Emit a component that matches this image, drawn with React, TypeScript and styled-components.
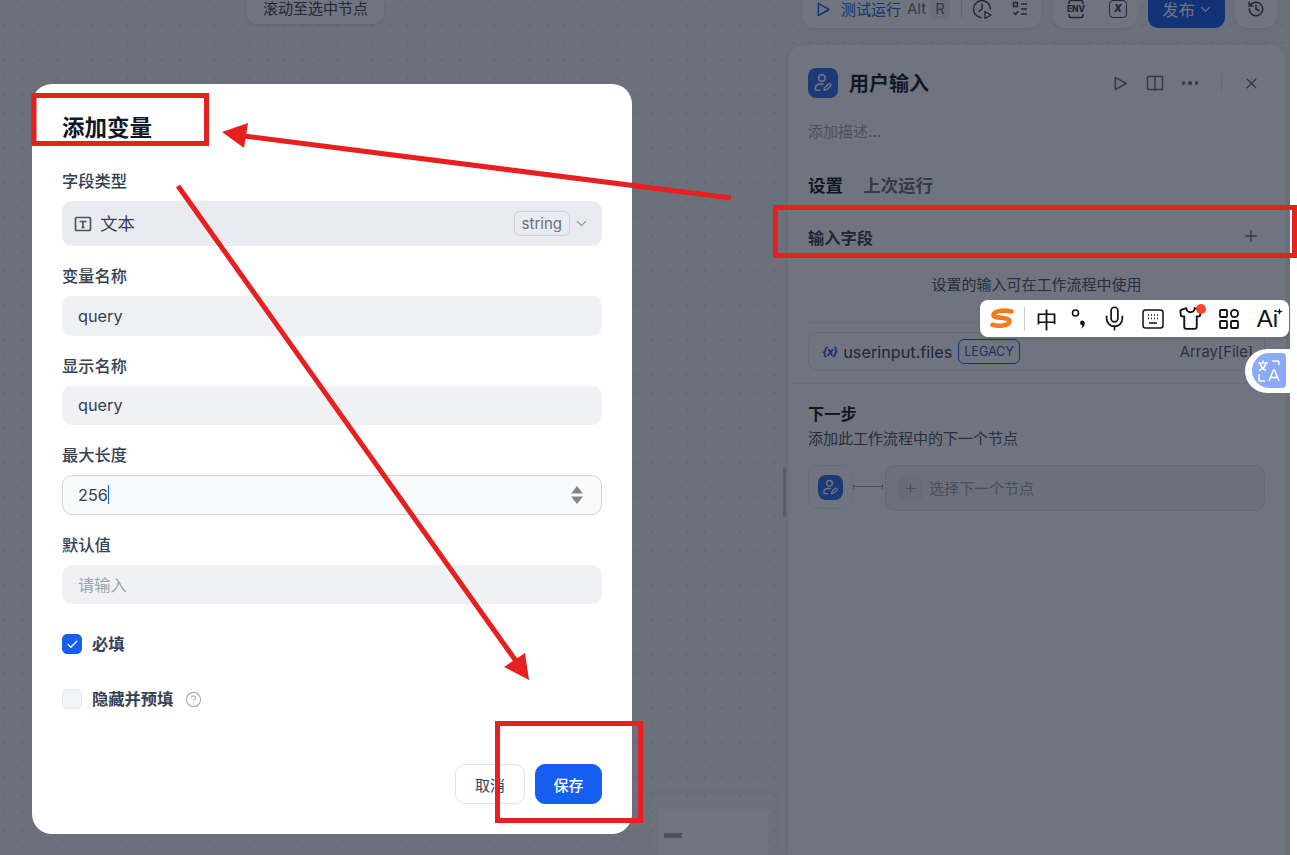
import styled, { createGlobalStyle } from "styled-components";
import {
  Check,
  ChevronDown,
  CircleHelp,
  History,
  Mic,
  Plus,
  Shirt,
  X,
} from "lucide-react";

const GlobalStyle = createGlobalStyle`
  html, body {
    margin: 0;
    padding: 0;
    background: #fff;
    overflow: hidden;
  }
  body {
    font-family: Inter, "Noto Sans CJK SC", sans-serif;
    color: #354052;
  }
  * {
    box-sizing: border-box;
  }
`;

const FIELDS = [
  { label: "变量名称", value: "query" },
  { label: "显示名称", value: "query" },
];

function PlayIcon({ size = 16, color = "currentColor" }: { size?: number; color?: string }) {
  return (
    <svg width={size} height={size} viewBox="0 0 16 16" fill="none">
      <path d="M2.5 1.5 14 8 2.5 14.5Z" stroke={color} strokeWidth="1.6" strokeLinejoin="round" />
    </svg>
  );
}

function UserEditIcon({ size = 18 }: { size?: number }) {
  return (
    <svg width={size} height={size} viewBox="0 0 18 18" fill="none" stroke="#fff" strokeWidth="1.5" strokeLinecap="round">
      <circle cx="8" cy="4.5" r="3" />
      <path d="M9 10H6.5C3.5 10 2 12 2 14.2c0 1 .6 1.3 1.4 1.3H6" />
      <path d="m10 15.5.5-2.2 3.4-3.3a1.3 1.3 0 0 1 1.9 1.8l-3.5 3.2Z" strokeWidth="1.3" strokeLinejoin="round" />
    </svg>
  );
}

function App() {
  return (
    <>
      <GlobalStyle />
      <Page>
        <Stage>
          <Canvas>
            <ScrollHint>滚动至选中节点</ScrollHint>
            <Minimap>
              <MinimapInner>
                <MinimapNode />
              </MinimapInner>
            </Minimap>
            <ResizeHandle />
          </Canvas>

          <Side>
            <Toolbar>
              <ToolGroup $width={239} $after={1}>
                <RunButton>
                  <PlayIcon size={15} />
                  <RunLabel>测试运行</RunLabel>
                </RunButton>
                <Shortcut>Alt</Shortcut>
                <Shortcut $tinted>R</Shortcut>
                <ToolDivider />
                <svg width="20" height="20" viewBox="0 0 20 20" fill="none" stroke="#354052" strokeWidth="1.5">
                  <path d="M9 18.5a8.5 8.5 0 1 1 9.5-8.5" strokeLinecap="round" />
                  <path d="M10 5v5l-3 2.5" strokeLinecap="round" />
                  <path d="m13 12.5 6 3.5-6 3.5Z" strokeLinejoin="round" strokeWidth="1.3" />
                </svg>
                <ChecklistIcon viewBox="0 0 16 16" fill="none" stroke="#354052" strokeWidth="1.5">
                  <rect x="1.5" y="1.5" width="4" height="4" />
                  <path d="M9 3h6M9 8h6M9 13h6M1.5 11.5l2 2 3-3.5" />
                </ChecklistIcon>
              </ToolGroup>
              <ToolGroup $width={84}>
                <EnvIcon>
                  <svg width="18" height="20" viewBox="0 0 18 20" fill="none" stroke="#354052" strokeWidth="1.5">
                    <path d="M2 5V3.5A2 2 0 0 1 4 1.500h10a2 2 0 0 1 2 2V5M2 15v1.500a2 2 0 0 0 2 2h10a2 2 0 0 0 2-2V15" />
                  </svg>
                  <EnvLabel>ENV</EnvLabel>
                </EnvIcon>
                <VarIcon>x</VarIcon>
              </ToolGroup>
              <PublishButton>
                发布
                <ChevronDown size={15} strokeWidth={2.2} />
              </PublishButton>
              <ToolGroup $width={42}>
                <History size={18} color="#354052" strokeWidth={2} />
              </ToolGroup>
            </Toolbar>

            <Panel>
              <PanelHeader>
                <NodeIcon $size={30}>
                  <UserEditIcon size={20} />
                </NodeIcon>
                <PanelTitle>用户输入</PanelTitle>
                <HeaderActions>
                  <PlayIcon size={15} color="#676f83" />
                  <svg width="18" height="18" viewBox="0 0 18 18" fill="none" stroke="#676f83" strokeWidth="1.5">
                    <path d="M1.500 2.500H9v13H1.500ZM9 2.500h7.500v13H9ZM9 15.500v1.500" strokeLinejoin="round" />
                  </svg>
                  <Dots>
                    <i />
                    <i />
                    <i />
                  </Dots>
                  <ActionDivider />
                  <X size={17} color="#676f83" strokeWidth={2} />
                </HeaderActions>
              </PanelHeader>
              <PanelDescription>添加描述...</PanelDescription>

              <Tabs>
                <Tab $active>设置</Tab>
                <Tab>上次运行</Tab>
              </Tabs>

              <PanelSection>
                <FieldsHeader>
                  输入字段
                  <Plus size={18} color="#676f83" strokeWidth={1.8} />
                </FieldsHeader>
                <Helper>设置的输入可在工作流程中使用</Helper>
                <ThinRule />
                <VariableRow>
                  <VariableMark>{"{x}"}</VariableMark>
                  <VariableName>userinput.files</VariableName>
                  <LegacyBadge>LEGACY</LegacyBadge>
                  <VariableType>Array[File]</VariableType>
                </VariableRow>
              </PanelSection>
              <PanelRule />

              <PanelSection>
                <NextTitle>下一步</NextTitle>
                <NextHint>添加此工作流程中的下一个节点</NextHint>
                <NextRow>
                  <NodeCard>
                    <NodeIcon $size={25}>
                      <UserEditIcon size={17} />
                    </NodeIcon>
                  </NodeCard>
                  <Connector />
                  <NextSlot>
                    <SlotPlus>
                      <Plus size={15} color="#98a2b2" strokeWidth={1.8} />
                    </SlotPlus>
                    <SlotText>选择下一个节点</SlotText>
                  </NextSlot>
                </NextRow>
              </PanelSection>
            </Panel>
          </Side>
          <Scrim />
        </Stage>

        <Dialog>
          <DialogTitle>添加变量</DialogTitle>
          <Field>
            <FieldLabel>字段类型</FieldLabel>
            <SelectBox>
              <svg width="18" height="18" viewBox="0 0 18 18" fill="none" stroke="#495464" strokeWidth="1.7">
                <rect x="1.500" y="2.500" width="15" height="13" rx="1" />
                <path d="M5.500 6.500h7M9 6.500v6M7.500 12.500h3" />
              </svg>
              <SelectText>文本</SelectText>
              <TypeTag>string</TypeTag>
              <ChevronDown size={17} color="#8a93a3" strokeWidth={1.8} />
            </SelectBox>
          </Field>
          {FIELDS.map((f) => (
            <Field key={f.label}>
              <FieldLabel>{f.label}</FieldLabel>
              <TextBox>{f.value}</TextBox>
            </Field>
          ))}
          <Field>
            <FieldLabel>最大长度</FieldLabel>
            <TextBox $focused>
              256
              <Caret />
              <Spinner viewBox="0 0 12 20">
                <path d="M6 1 12 8.500H0ZM6 19 0 11.500h12Z" fill="#858585" />
              </Spinner>
            </TextBox>
          </Field>
          <Field>
            <FieldLabel>默认值</FieldLabel>
            <TextBox $placeholder>请输入</TextBox>
          </Field>

          <CheckRows>
            <CheckRow>
              <CheckBox $checked>
                <Check size={13} color="#fff" strokeWidth={2.4} />
              </CheckBox>
              必填
            </CheckRow>
            <CheckRow>
              <CheckBox />
              隐藏并预填
              <HelpIcon size={17} color="#a9afba" strokeWidth={1.6} />
            </CheckRow>
          </CheckRows>

          <DialogFooter>
            <CancelButton>取消</CancelButton>
            <SaveButton>保存</SaveButton>
          </DialogFooter>
        </Dialog>

        <ImeBar>
          <ImeSlot>
            <svg width="24" height="21" viewBox="0 0 24 21" fill="none" stroke="#f37a1f" strokeWidth="4.600" strokeLinecap="round">
              <path d="M21.500 3.500C14 1.800 4 2.500 3.500 7c-.4 4 16.500 1.500 16 6.500-.4 4.500-11 5-17 3.300" />
            </svg>
          </ImeSlot>
          <ImeSlot $rule>中</ImeSlot>
          <ImeSlot>
            <svg width="16" height="24" viewBox="0 0 16 24" fill="none">
              <circle cx="4.500" cy="6" r="3" stroke="#111" strokeWidth="1.500" />
              <path d="M10.800 13.500a2.600 2.600 0 0 1 3 2.500c0 2.400-1.300 4.200-3.600 5.800.9-1.700 1.200-2.700.8-3.500a2.500 2.500 0 0 1-.2-4.800Z" fill="#111" />
            </svg>
          </ImeSlot>
          <ImeSlot>
            <Mic size={27} color="#111" strokeWidth={1.500} />
          </ImeSlot>
          <ImeSlot>
            <svg width="22" height="20" viewBox="0 0 22 20" fill="none" stroke="#111" strokeWidth="1.500">
              <rect x="1" y="1" width="20" height="18" rx="2.500" />
              <path d="M6 6h1M9 6h1M12 6h1M15 6h1M6 9.500h1M9 9.500h1M12 9.500h1M15 9.500h1M7 14h8" />
            </svg>
          </ImeSlot>
          <ImeSlot>
            <Shirt size={25} color="#111" strokeWidth={1.800} />
            <RedDot />
          </ImeSlot>
          <ImeSlot>
            <svg width="20" height="20" viewBox="0 0 20 20" fill="none" stroke="#111" strokeWidth="1.800">
              <rect x="1" y="1" width="7" height="7" rx="1" />
              <circle cx="15.500" cy="4.500" r="3.600" />
              <rect x="1" y="12" width="7" height="7" rx="1" />
              <rect x="12" y="12" width="7" height="7" rx="1" />
            </svg>
          </ImeSlot>
          <ImeSlot $ai>
            Ai
            <AiSpark viewBox="0 0 8 8">
              <path d="M4 0 5 3 8 4 5 5 4 8 3 5 0 4 3 3Z" fill="#111" />
            </AiSpark>
          </ImeSlot>
        </ImeBar>

        <TranslateTab>
          <TranslateButton>
            <svg width="24" height="24" viewBox="0 0 24 24" fill="none" stroke="#fff" strokeWidth="1.400">
              <path d="M1 4h10M6 1.500V4M3 4c.8 3.500 3 6 6 7.500M9 4c-.8 3.500-3 6-7 7.500M15 2h6a1 1 0 0 1 1 1v3M2 15v6a1 1 0 0 0 1 1h5M12 22l4.500-11h1L22 22M13.500 18.500h7" />
            </svg>
          </TranslateButton>
        </TranslateTab>

        <Annotations viewBox="0 0 1297 855">
          <g fill="none" stroke="#e71f1f" strokeWidth="5">
            <rect x="34" y="95.500" width="172.500" height="48" />
            <rect x="775.500" y="207.500" width="519" height="48" />
            <rect x="497.500" y="723.500" width="143" height="97" />
          </g>
          <path d="M731 198 240 135.500M178 186 516 661" stroke="#e71f1f" strokeWidth="5" fill="none" />
          <path d="M222 132 248 123 244 148ZM529 680 504 667 525 653Z" fill="#e71f1f" />
        </Annotations>
      </Page>
    </>
  );
}

export default App;

const Page = styled.div`
  position: relative;
  width: 1297px;
  height: 855px;
  overflow: hidden;
  background: #fff;
`;

const Stage = styled.div`
  position: relative;
  width: 1290px;
  height: 855px;
  display: grid;
  grid-template-columns: 788px 1fr;
  overflow: hidden;
  background-color: #f2f4f7;
  background-image: radial-gradient(circle, #d8dce3 1.2px, transparent 1.3px);
  background-size: 17.5px 17.5px;
  background-position: -4px -1px;
`;

const Scrim = styled.div`
  position: absolute;
  inset: 0;
  background: rgba(16, 24, 40, 0.6);
`;

const Canvas = styled.div`
  position: relative;
  display: flex;
  flex-direction: column;
  justify-content: space-between;
`;

const ScrollHint = styled.div`
  margin-left: 247px;
  width: 137px;
  height: 24px;
  border-radius: 0 0 10px 10px;
  background: #fff;
  box-shadow: 0 1px 3px rgba(16, 24, 40, 0.1);
  font-size: 15px;
  line-height: 17px;
  text-align: center;
  color: #354052;
`;

const Minimap = styled.div`
  margin-left: 650px;
  width: 126px;
  height: 61px;
  padding: 15px 8px 0;
  box-shadow: 0 -1px 6px rgba(16, 24, 40, 0.04);
`;

const MinimapInner = styled.div`
  height: 100%;
  padding: 24px 6px 0;
  background: #fff;
`;

const MinimapNode = styled.div`
  width: 18px;
  height: 5px;
  background: #a6acb8;
`;

const ResizeHandle = styled.div`
  position: absolute;
  left: 783px;
  top: 467px;
  width: 3px;
  height: 50px;
  border-radius: 2px;
  background: #c4c8d0;
`;

const Side = styled.div`
  display: flex;
  flex-direction: column;
  padding-right: 4px;
  min-width: 0;
`;

const Toolbar = styled.div`
  height: 28px;
  margin-bottom: 17px;
  padding-left: 14px;
  display: flex;
  align-items: flex-end;
  gap: 11px;
`;

const ToolGroup = styled.div<{ $width: number; $after?: number }>`
  flex: none;
  width: ${(p) => p.$width}px;
  height: 38px;
  margin-right: ${(p) => p.$after ?? 0}px;
  padding: 0 8px 0 14px;
  display: flex;
  align-items: center;
  border-radius: 12px;
  background: #fff;
  box-shadow: 0 1px 2px rgba(16, 24, 40, 0.08);
  color: #354052;

  &:last-child {
    padding: 0;
    justify-content: center;
  }
`;

const RunButton = styled.div`
  display: flex;
  align-items: center;
  gap: 10px;
  font-size: 15px;
  color: #155eef;
  white-space: nowrap;
`;

const RunLabel = styled.span`
  padding-bottom: 2px;
`;

const Shortcut = styled.span<{ $tinted?: boolean }>`
  margin-left: ${(p) => (p.$tinted ? 4 : 6)}px;
  padding: 0 ${(p) => (p.$tinted ? 5 : 0)}px;
  border-radius: 4px;
  background: ${(p) => (p.$tinted ? "rgba(200, 206, 218, 0.25)" : "transparent")};
  font-size: 15px;
  line-height: 20px;
  color: #676f83;
`;

const ToolDivider = styled.span`
  width: 1px;
  height: 18px;
  margin: 0 10px 0 11px;
  background: #d5d9e0;
`;

const ChecklistIcon = styled.svg`
  width: 16px;
  height: 16px;
  margin-left: 20px;
`;

const EnvIcon = styled.span`
  position: relative;
  width: 18px;
  height: 20px;
  display: flex;
`;

const EnvLabel = styled.span`
  position: absolute;
  left: -1px;
  right: -1px;
  top: 5px;
  font-size: 8.500px;
  font-weight: 800;
  line-height: 10px;
  text-align: center;
  color: #354052;
`;

const VarIcon = styled.span`
  width: 18px;
  height: 18px;
  margin-left: 24px;
  border: 1.500px solid #354052;
  border-radius: 4px;
  font-size: 13px;
  font-style: italic;
  font-weight: 700;
  line-height: 13px;
  text-align: center;
`;

const PublishButton = styled.div`
  flex: none;
  width: 77px;
  height: 38px;
  margin-right: -1px;
  padding-left: 2px;
  display: flex;
  align-items: center;
  justify-content: center;
  gap: 3px;
  border-radius: 10px;
  background: #155eef;
  font-size: 16.250px;
  color: #fff;
`;

const Panel = styled.section`
  flex: 1;
  display: flex;
  flex-direction: column;
  padding-top: 23px;
  border-radius: 16px 16px 0 0;
  background: #fff;
  box-shadow: 0 0 4px rgba(16, 24, 40, 0.06);
`;

const PanelHeader = styled.header`
  height: 30px;
  margin: 0 26px 0 20px;
  display: flex;
  align-items: center;
`;

const NodeIcon = styled.span<{ $size: number }>`
  flex: none;
  width: ${(p) => p.$size}px;
  height: ${(p) => p.$size}px;
  display: flex;
  align-items: center;
  justify-content: center;
  border-radius: 8px;
  background: #2e6cf0;
`;

const PanelTitle = styled.h2`
  margin: 0 0 0 11px;
  padding-bottom: 2px;
  font-size: 20px;
  font-weight: 700;
  color: #101828;
`;

const HeaderActions = styled.div`
  margin-left: auto;
  display: flex;
  align-items: center;

  & > svg:first-child {
    margin-right: 18px;
  }
`;

const Dots = styled.span`
  margin: 0 0 0 18px;
  display: flex;
  gap: 3px;

  i {
    width: 3.500px;
    height: 3.500px;
    border-radius: 50%;
    background: #676f83;
  }

  & + span {
    margin-left: 23px;
  }
`;

const ActionDivider = styled.span`
  width: 1px;
  height: 17px;
  margin-right: 21px;
  background: #e3e6ea;
`;

const PanelDescription = styled.p`
  margin: 23px 20px 0;
  font-size: 15px;
  line-height: 22px;
  color: #a4abb8;
`;

const Tabs = styled.nav`
  margin-top: 31px;
  padding: 0 20px;
  display: flex;
  gap: 20px;
  border-bottom: 1px solid #eceef2;
`;

const Tab = styled.span<{ $active?: boolean }>`
  padding-bottom: 10px;
  border-bottom: 2px solid ${(p) => (p.$active ? "#101828" : "transparent")};
  margin-bottom: -1px;
  font-size: 17.500px;
  font-weight: 700;
  line-height: 24px;
  color: ${(p) => (p.$active ? "#101828" : "#676f83")};
`;

const PanelSection = styled.div`
  padding: 0 21px 0 20px;
`;

const FieldsHeader = styled.div`
  margin-top: 15px;
  height: 24px;
  padding-right: 5px;
  display: flex;
  align-items: center;
  justify-content: space-between;
  font-size: 16.250px;
  font-weight: 600;
  color: #354052;

  svg {
    margin-bottom: 2px;
  }
`;

const Helper = styled.p`
  margin: 25px 0 0;
  font-size: 15px;
  line-height: 22px;
  text-align: center;
  color: #495464;
`;

const ThinRule = styled.hr`
  margin: 26px 0 9px;
  border: 0;
  border-top: 1px solid #eef0f3;
`;

const VariableRow = styled.div`
  height: 39px;
  padding: 0 11px 0 13px;
  display: flex;
  align-items: center;
  border: 1px solid #e6e8ec;
  border-radius: 10px;
`;

const VariableMark = styled.span`
  font-size: 12px;
  font-style: italic;
  font-weight: 700;
  letter-spacing: -1px;
  color: #155eef;
`;

const VariableName = styled.span`
  margin-left: 6px;
  font-size: 16.250px;
  color: #354052;
`;

const LegacyBadge = styled.span`
  margin-left: 6px;
  padding: 0 5px;
  height: 25px;
  display: flex;
  align-items: center;
  border: 1px solid #155eef;
  border-radius: 6px;
  font-size: 12.500px;
  color: #155eef;
`;

const VariableType = styled.span`
  margin-left: auto;
  font-size: 14.800px;
  color: #495464;
`;

const PanelRule = styled.hr`
  width: 100%;
  margin: 12px 0 0;
  border: 0;
  border-top: 1px solid #eef0f3;
`;

const NextTitle = styled.h3`
  margin: 19px 0 0;
  font-size: 16.250px;
  font-weight: 600;
  line-height: 22px;
  color: #101828;
`;

const NextHint = styled.p`
  margin: 4px 0 0;
  font-size: 15px;
  line-height: 20px;
  color: #495464;
`;

const NextRow = styled.div`
  margin-top: 16px;
  display: flex;
  align-items: flex-start;
`;

const NodeCard = styled.div`
  flex: none;
  width: 45px;
  height: 44px;
  display: flex;
  align-items: center;
  justify-content: center;
  border: 1px solid #eceef2;
  border-radius: 10px;
`;

const Connector = styled.span`
  flex: none;
  width: 30px;
  height: 5px;
  margin: 19px 2px 0 0;
  border-left: 1px solid #98a2b2;
  border-right: 1px solid #98a2b2;
  background: linear-gradient(#98a2b2, #98a2b2) center / 100% 1px no-repeat;
`;

const NextSlot = styled.div`
  flex: 1;
  height: 46px;
  padding: 0 12px;
  display: flex;
  align-items: center;
  gap: 6px;
  border: 1px dashed #d7dae0;
  border-radius: 10px;
  background: #f2f4f7;
  font-size: 15px;
  color: #98a2b2;
`;

const SlotPlus = styled.span`
  width: 25px;
  height: 25px;
  display: flex;
  align-items: center;
  justify-content: center;
  border-radius: 6px;
  background: #e9ebef;
`;

const SlotText = styled.span`
  padding-bottom: 2px;
`;

const Dialog = styled.div`
  position: absolute;
  left: 32px;
  top: 84px;
  width: 600px;
  height: 750px;
  padding: 30px;
  display: flex;
  flex-direction: column;
  border-radius: 20px;
  background: #fff;
`;

const DialogTitle = styled.h1`
  margin: 0 0 9px;
  font-size: 22.500px;
  font-weight: 700;
  line-height: 28px;
  color: #101828;
`;

const Field = styled.div`
  margin-top: 20px;
`;

const FieldLabel = styled.div`
  height: 20px;
  margin-bottom: 10px;
  font-size: 16.250px;
  font-weight: 500;
  line-height: 20px;
  color: #354052;
`;

const SelectBox = styled.div`
  height: 45px;
  padding: 0 12px;
  display: flex;
  align-items: center;
  border-radius: 10px;
  background: #e9ebf0;
  color: #354052;
`;

const SelectText = styled.span`
  margin-left: 8px;
  padding-bottom: 2px;
  flex: 1;
  font-size: 17.500px;
`;

const TypeTag = styled.span`
  height: 25px;
  margin-right: 3px;
  padding: 0 7px;
  border: 1px solid #ced1d9;
  border-radius: 6px;
  font-size: 15px;
  line-height: 23px;
  color: #676f83;
`;

const TextBox = styled.div<{ $focused?: boolean; $placeholder?: boolean }>`
  position: relative;
  height: 39.500px;
  padding: 0 15px;
  display: flex;
  align-items: center;
  border: 1px solid ${(p) => (p.$focused ? "#d0d5dd" : "transparent")};
  border-radius: 10px;
  background: ${(p) => (p.$focused ? "#f9fafb" : "#f0f1f5")};
  font-size: 16.250px;
  color: ${(p) => (p.$placeholder ? "#98a2b2" : "#354052")};
`;

const Caret = styled.span`
  width: 1px;
  height: 19px;
  background: #155eef;
`;

const Spinner = styled.svg`
  width: 12px;
  height: 20px;
  margin-left: auto;
  margin-right: 3px;
`;

const CheckRows = styled.div`
  margin-top: 30px;
  display: flex;
  flex-direction: column;
  gap: 35px;
`;

const CheckRow = styled.div`
  height: 20px;
  display: flex;
  align-items: flex-start;
  font-size: 16.250px;
  font-weight: 600;
  line-height: 20px;
  color: #354052;
`;

const HelpIcon = styled(CircleHelp)`
  margin-left: 12px;
  align-self: center;
`;

const CheckBox = styled.span<{ $checked?: boolean }>`
  width: 20px;
  height: 20px;
  margin-right: 10px;
  display: flex;
  align-items: center;
  justify-content: center;
  border: 1px solid ${(p) => (p.$checked ? "#155eef" : "#e6e8ee")};
  border-radius: 5px;
  background: ${(p) => (p.$checked ? "#155eef" : "#f2f4f7")};
`;

const DialogFooter = styled.div`
  margin-top: auto;
  display: flex;
  justify-content: flex-end;
  gap: 10px;
`;

const CancelButton = styled.button`
  width: 70px;
  height: 40px;
  padding: 0;
  border: 1px solid #dfe2e7;
  border-radius: 10px;
  background: #fff;
  font: inherit;
  font-size: 15px;
  color: #354052;
`;

const SaveButton = styled(CancelButton)`
  width: 67px;
  border-color: #155eef;
  background: #155eef;
  font-weight: 500;
  color: #fff;
`;

const ImeBar = styled.div`
  position: absolute;
  left: 980px;
  top: 300px;
  width: 309px;
  height: 37px;
  display: grid;
  grid-template-columns: 44px 44px 22px 48px 30px 44px 34px 43px;
  align-items: center;
  border-radius: 8px;
  background: #fff;
  box-shadow: 0 2px 6px rgba(0, 0, 0, 0.08);
`;

const ImeSlot = styled.span<{ $rule?: boolean; $ai?: boolean }>`
  position: relative;
  height: ${(p) => (p.$rule ? 24 : 37)}px;
  padding-bottom: ${(p) => (p.$rule ? 2 : 0)}px;
  display: flex;
  align-items: center;
  justify-content: center;
  border-left: ${(p) => (p.$rule ? "1px solid #c9c9c9" : "0")};
  font-size: ${(p) => (p.$ai ? 24 : 22)}px;
  color: #111;
  font-family: ${(p) => (p.$ai ? '"Liberation Sans", sans-serif' : "inherit")};
`;

const RedDot = styled.span`
  position: absolute;
  right: 6px;
  top: 4px;
  width: 10px;
  height: 10px;
  border-radius: 50%;
  background: #f9452d;
`;

const AiSpark = styled.svg`
  position: absolute;
  right: 6px;
  top: 8px;
  width: 7px;
  height: 7px;
`;

const TranslateTab = styled.div`
  position: absolute;
  left: 1245px;
  top: 349px;
  width: 45px;
  height: 44px;
  padding: 4px 4px 5px 7px;
  border-radius: 22px 0 0 22px;
  background: #fff;
`;

const TranslateButton = styled.div`
  width: 100%;
  height: 100%;
  display: flex;
  align-items: center;
  justify-content: center;
  border-radius: 18px 4px 4px 18px;
  background: #8caafc;
`;

const Annotations = styled.svg`
  position: absolute;
  inset: 0;
  width: 1297px;
  height: 855px;
  pointer-events: none;
`;
